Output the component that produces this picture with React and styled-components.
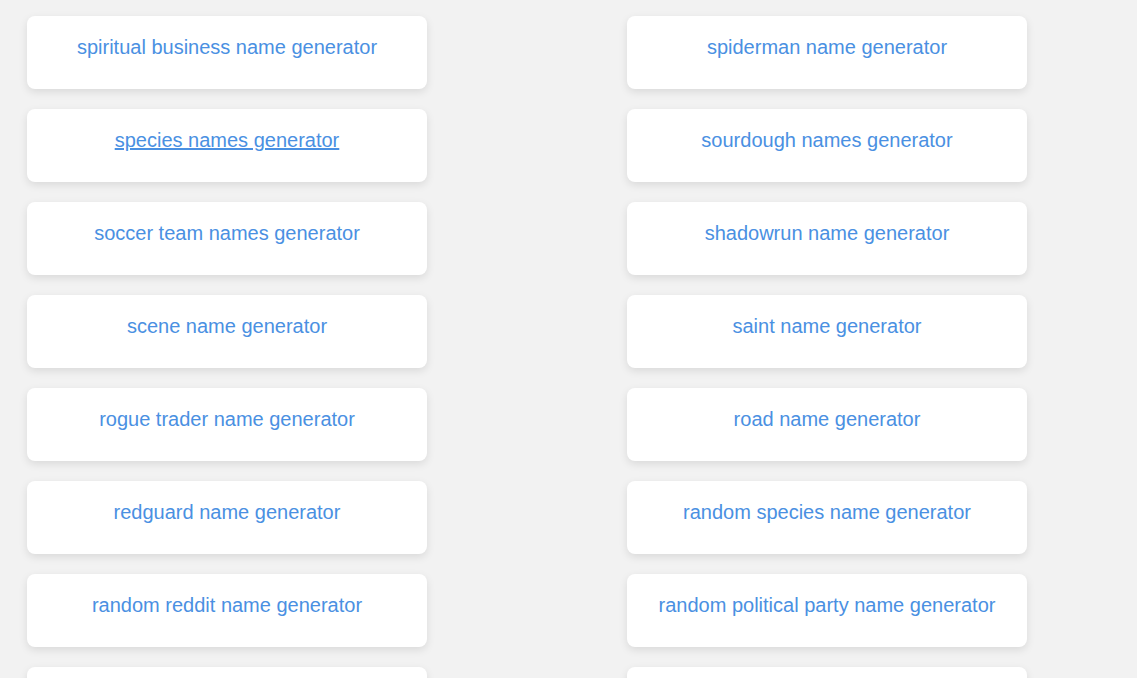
import React from 'react';
import styled, { createGlobalStyle } from 'styled-components';

const GlobalStyle = createGlobalStyle`
  html, body {
    margin: 0;
    padding: 0;
    background: #f2f2f2;
    font-family: "Liberation Sans", Arial, sans-serif;
  }
`;

const names = [
  ['spiritual business name generator', 'spiderman name generator'],
  ['species names generator', 'sourdough names generator'],
  ['soccer team names generator', 'shadowrun name generator'],
  ['scene name generator', 'saint name generator'],
  ['rogue trader name generator', 'road name generator'],
  ['redguard name generator', 'random species name generator'],
  ['random reddit name generator', 'random political party name generator'],
  ['random pokemon name generator', 'random planet name generator'],
];

const App = () => {
  return (
    <>
      <GlobalStyle />
      <Grid>
        {names.flat().map((name) => (
          <Card key={name}>
            <CardLink href="#" $active={name === 'species names generator'}>
              {name}
            </CardLink>
          </Card>
        ))}
      </Grid>
    </>
  );
};

const Grid = styled.div`
  display: grid;
  grid-template-columns: 400px 400px;
  column-gap: 200px;
  row-gap: 20px;
  padding: 16px 27px;
`;

const Card = styled.div`
  height: 73px;
  box-sizing: border-box;
  background: #ffffff;
  border-radius: 8px;
  box-shadow: 0 3px 8px rgba(0, 0, 0, 0.1);
  padding-top: 20px;
  text-align: center;
`;

const CardLink = styled.a`
  font-size: 20px;
  line-height: 23px;
  color: #4a90e2;
  text-decoration: ${({ $active }) => ($active ? 'underline' : 'none')};
`;

export default App;
